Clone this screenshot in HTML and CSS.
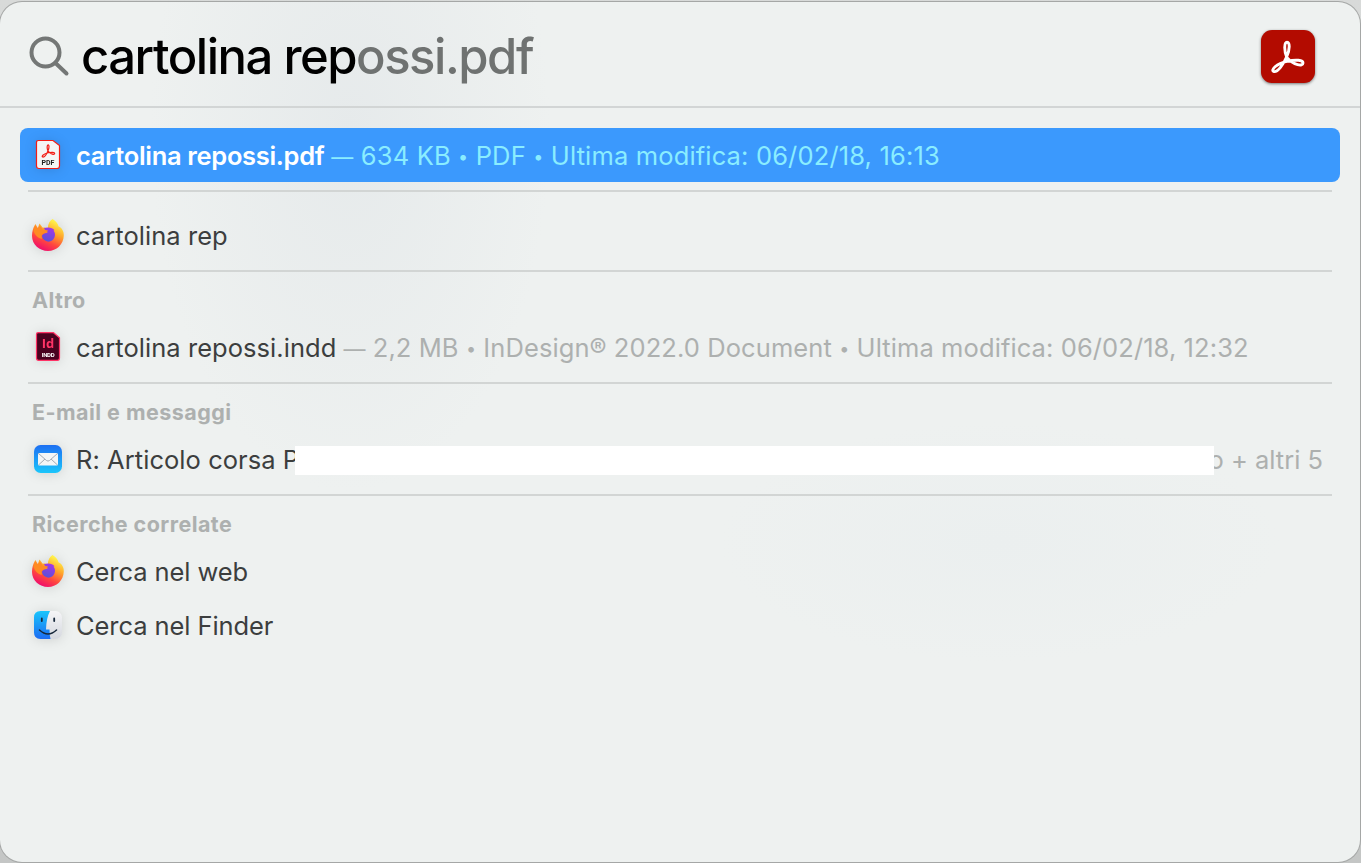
FILE: index.html
```html
<!DOCTYPE html>
<html lang="it">
<head>
  <meta charset="UTF-8">
  <meta name="viewport" content="width=device-width, initial-scale=1.0">
  <title>Spotlight</title>
  <link rel="stylesheet" href="styles.css">
</head>
<body>
  <svg class="defs" width="0" height="0">
    <defs>
      <linearGradient id="fox" x1="0.8" y1="0" x2="0.3" y2="1">
        <stop offset="0.1" stop-color="#fff04a"/>
        <stop offset="0.4" stop-color="#ffa52a"/>
        <stop offset="0.7" stop-color="#ff4540"/>
        <stop offset="1" stop-color="#ee0870"/>
      </linearGradient>
      <linearGradient id="globe" x1="0.7" y1="0" x2="0.3" y2="1">
        <stop offset="0" stop-color="#a436e8"/>
        <stop offset="1" stop-color="#5852d8"/>
      </linearGradient>
      <linearGradient id="mail" x1="0" y1="0" x2="0" y2="1">
        <stop offset="0" stop-color="#1d6ff2"/>
        <stop offset="1" stop-color="#1bc6fb"/>
      </linearGradient>
      <linearGradient id="finder" x1="0" y1="0" x2="0" y2="1">
        <stop offset="0" stop-color="#19c5fb"/>
        <stop offset="1" stop-color="#1d6cf2"/>
      </linearGradient>
      <linearGradient id="face" x1="0" y1="0" x2="0" y2="1">
        <stop offset="0" stop-color="#f5f5f7"/>
        <stop offset="1" stop-color="#d5d8df"/>
      </linearGradient>
      <symbol id="acrobat" viewBox="0 0 34 34">
        <path d="M15.8 17.5C13 11 13 2.200 16 2.200s3 7-.2 14.300C12.500 24.500 6.500 32.300 3 31.600c-4-1.200 2.500-8.200 13-10.300 9-1.900 16-1.300 16 1.700 0 3.700-9 2.500-16.200-5.500z" fill="none" stroke="currentColor" stroke-width="2.900" stroke-linejoin="round"/>
      </symbol>
      <symbol id="firefox" viewBox="0 0 32 32">
        <path d="M20.500 0c3.800 2.300 5.300 4.600 6 7.300C30 9 32 12.500 31.800 16.500 31.500 25.500 24.500 32 16 32S0 25.500 0 17c0-4.500 1.200-8 2.600-10.500L3.400 5l2.400 4L7.500 4.500l3.300 4.200c2-.5 3.500-.2 5 .3.200-4.500 2-7.200 4.700-9z" fill="url(#fox)"/>
        <path d="M12 9.200c4-1.400 8.500-.8 10.500 2-.6.200-1 .3-1 .3 1.800 2 1.900 4.800.9 7.100-1.200 3-4.100 4.500-7.100 3.900-3-.6-5.300-3.100-5.300-5.900 1.500-2 3-2.200 6-3-1.500-.8-3.200-2.600-4-4.400z" fill="url(#globe)"/>
        <path d="M1.500 10.500L3.400 6.500l2.400 3.700L7.700 6.500l2.800 4c2 .2 4 .8 5.500 1-.5 2-4 2.200-5 3.200-2 .7-1.500 2.500-1 5C5.500 19.500 1.500 14.500 1.500 10.500z" fill="#ff8b22"/>
      </symbol>
    </defs>
  </svg>

  <main class="spotlight">
    <header class="search">
      <svg class="search__icon" width="42" height="42" viewBox="0 0 42 42">
        <circle cx="16.500" cy="16.500" r="14"/>
        <path d="M27 27.500L37.500 37.500"/>
      </svg>
      <p class="search__text"><span class="search__typed">cartolina rep</span><span class="search__hint">ossi.pdf</span></p>
      <div class="search__app">
        <svg width="34" height="34"><use href="#acrobat"/></svg>
      </div>
    </header>

    <section class="results">
      <div class="row row--active">
        <svg class="row__icon" width="32" height="32" viewBox="0 0 32 32">
          <path d="M6.500 1.500h14.500l6.500 5v20.500q0 2.500-2.500 2.500H7q-2.500 0-2.500-2.500V3.500q0-2 2-2z" fill="#f5f5f5" stroke="#f21d16" stroke-width="1.200"/>
          <svg x="8.500" y="5" width="16" height="14" color="#f21d16"><use href="#acrobat"/></svg>
          <text class="pdf-label" x="16" y="26">PDF</text>
        </svg>
        <span class="row__name row__name--active">cartolina repossi.pdf</span>
        <span class="row__info row__info--active"><span class="dash">—</span> 634 KB <span class="dot">•</span> PDF <span class="dot">•</span> Ultima modifica: 06/02/18, 16:13</span>
      </div>
      <hr class="line line--wide">
      <div class="row">
        <svg class="row__icon" width="32" height="32"><use href="#firefox"/></svg>
        <span class="row__name">cartolina rep</span>
      </div>
      <hr class="line">

      <h2 class="heading">Altro</h2>
      <div class="row">
        <svg class="row__icon" width="32" height="32" viewBox="0 0 32 32">
          <path d="M6 1.700h15.500l6 5v20.300q0 2.300-2 2.300H6.500q-2 0-2-2V3.200q0-1.500 1.500-1.500z" fill="#49021f" stroke="#ff3366" stroke-width="1.200"/>
          <text class="indd-logo" x="16" y="17">Id</text>
          <text class="indd-label" x="16" y="26">INDD</text>
        </svg>
        <span class="row__name">cartolina repossi.indd</span>
        <span class="row__info"><span class="dash">—</span> 2,2 MB <span class="dot">•</span> InDesign® 2022.0 Document <span class="dot">•</span> Ultima modifica: 06/02/18, 12:32</span>
      </div>
      <hr class="line">

      <h2 class="heading">E-mail e messaggi</h2>
      <div class="row">
        <svg class="row__icon" width="32" height="32" viewBox="0 0 32 32">
          <rect x="2" y="2" width="28" height="28" rx="6.500" fill="url(#mail)"/>
          <rect x="6" y="10" width="20" height="12.500" rx="1.500" fill="#f4f5f6"/>
          <path d="M6.500 10.500l8 7q1.500 1.200 3 0l8-7M6.500 22l6.500-6M25.500 22l-6.500-6" fill="none" stroke="#a4acb5" stroke-width="1"/>
        </svg>
        <span class="row__name row__name--mail">R: Articolo corsa P</span>
        <span class="redacted"></span>
        <span class="more">o + altri 5</span>
      </div>
      <hr class="line">

      <h2 class="heading">Ricerche correlate</h2>
      <div class="row">
        <svg class="row__icon" width="32" height="32"><use href="#firefox"/></svg>
        <span class="row__name row__name--web">Cerca nel web</span>
      </div>
      <div class="row">
        <svg class="row__icon" width="32" height="32" viewBox="0 0 32 32">
          <rect x="2" y="2" width="28" height="28" rx="6.500" fill="url(#face)"/>
          <path d="M18 2H8.500Q2 2 2 8.500v15Q2 30 8.500 30H18.500q-1-4-1-9.500H14Q14.300 9 18 2z" fill="url(#finder)"/>
          <path d="M9.800 9.500v2.500M22.200 9.500v2.500" stroke="#17283b" stroke-width="1.800" stroke-linecap="round"/>
          <path d="M7.500 21q8.500 8 17 0" fill="none" stroke="#17283b" stroke-width="1.500" stroke-linecap="round"/>
        </svg>
        <span class="row__name row__name--web">Cerca nel Finder</span>
      </div>
    </section>
  </main>
</body>
</html>
```
FILE: styles.css
```css
*,
*::before,
*::after {
  box-sizing: border-box;
}
body{
  margin: 0;
  padding: 2px 1px 1px 0;
  height: 863px;
  overflow: hidden;
  background: linear-gradient(#d8dad9, #c4c6c5);
  font-family: Inter, 'Liberation Sans', sans-serif;
  color: #3c3e3e;
}
.defs{
  position: absolute;
}
.spotlight{
  height: 860px;
  border-radius: 22px;
  overflow: hidden;
  background:
    radial-gradient(ellipse 200px 360px at 350px 130px, #e6eaeb, rgba(230, 234, 235, 0)),
    radial-gradient(ellipse 280px 120px at 1000px 540px, #ebefef, rgba(235, 239, 239, 0)),
    #eef1f0;
  box-shadow: 0 0 0 1px #a5a7a6;
}
.search{
  display: flex;
  align-items: center;
  height: 106px;
  padding: 5px 45px 0 29px;
  border-bottom: 2px solid #d2d5d5;
}
.search__icon{
  flex: none;
  fill: none;
  stroke: #747776;
  stroke-width: 4;
  stroke-linecap: round;
}
.search__text{
  margin: 0 auto 0 10px;
  font-size: 49px;
  font-weight: 500;
  line-height: 60px;
  letter-spacing: -1.480px;
  white-space: nowrap;
}
.search__typed{
  color: #000;
}
.search__hint{
  color: #6f7271;
}
.search__app{
  display: flex;
  align-items: center;
  justify-content: center;
  width: 54px;
  height: 53px;
  border-radius: 11px;
  background-color: #b30b00;
  color: #fff;
  box-shadow: 0 1px 3px rgba(0, 0, 0, 0.5);
}
.results{
  padding: 20px 20px 0;
}
.row{
  display: flex;
  align-items: center;
  height: 54px;
  padding: 0 17px 0 12px;
  font-size: 25.500px;
  font-weight: 430;
  line-height: 32px;
  white-space: nowrap;
}
.row--active{
  padding-top: 2px;
  border-radius: 8px;
  background-color: #3b99fd;
}
.row__icon{
  flex: none;
  margin: 0 12px 2px 0;
  filter: drop-shadow(0 1px 6px rgba(0, 0, 0, 0.12));
}
.row__name{
  flex: none;
  letter-spacing: 0.050px;
}
.row__name--active{
  color: #fff;
  font-weight: 600;
  letter-spacing: -0.330px;
}
.row__name--web{
  letter-spacing: -0.080px;
}
.row__info{
  margin-left: 7px;
  color: #adb0af;
  letter-spacing: 0.090px;
}
.row__info--active{
  color: #8aedff;
  letter-spacing: 0.150px;
}
.dash{
  font-size: 22px;
}
.dot{
  font-size: 18px;
  vertical-align: 2px;
}
.row__name--mail{
  width: 219px;
  overflow: hidden;
}
.line{
  height: 2px;
  margin: 7px 8px 0;
  border: 0;
  background-color: #d2d5d4;
}
.line--wide{
  margin: 8px 8px 17px;
}
.heading{
  margin: 0;
  padding: 14px 12px 7px;
  color: #adb0af;
  font-size: 21.500px;
  font-weight: 650;
  line-height: 28px;
  letter-spacing: 0.450px;
}
.redacted{
  flex: 1;
  height: 29px;
  background-color: #fff;
}
.more{
  display: flex;
  justify-content: flex-end;
  width: 109px;
  overflow: hidden;
  color: #adb0af;
}
.pdf-label{
  font: bold 7px Roboto, sans-serif;
  text-anchor: middle;
  fill: #222;
}
.indd-logo{
  font: bold 13px 'Open Sans', sans-serif;
  text-anchor: middle;
  fill: #ff3366;
}
.indd-label{
  font: bold 6px Roboto, sans-serif;
  letter-spacing: -0.300px;
  text-anchor: middle;
  fill: #fff;
}
```
